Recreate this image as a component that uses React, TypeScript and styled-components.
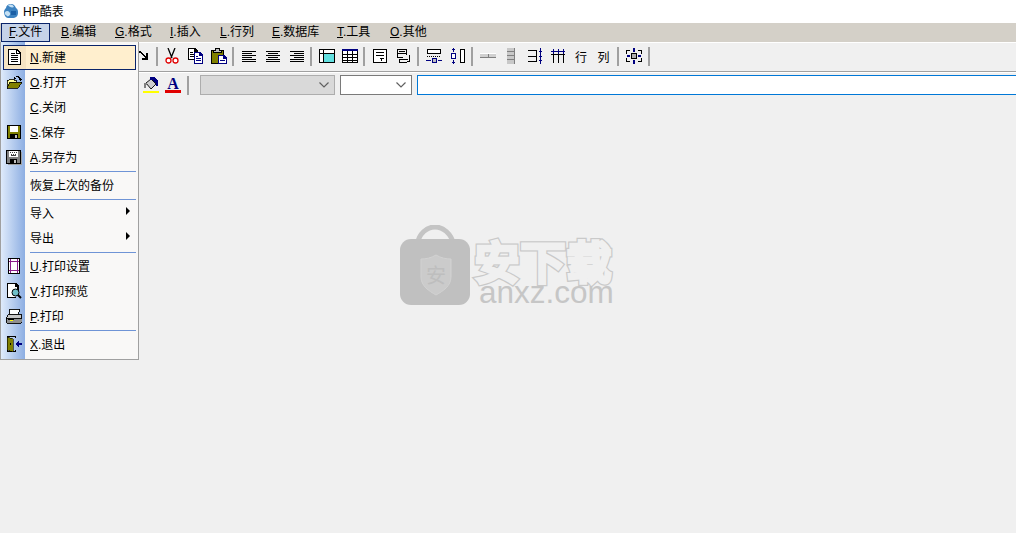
import React from 'react'
import styled, { createGlobalStyle } from 'styled-components'

const GlobalStyle = createGlobalStyle`
  html, body {
    margin: 0;
    padding: 0;
    background: #F0F0F0;
  }
  body {
    font-family: "Liberation Sans", "Noto Sans CJK SC", sans-serif;
    font-size: 12px;
    color: #000;
  }
`

const Page = styled.div`
  position: relative;
  width: 1016px;
  height: 533px;
  overflow: hidden;
  background: #F0F0F0;
`

const TitleBar = styled.div`
  box-sizing: border-box;
  height: 23px;
  background: #FFF;
  display: flex;
  align-items: center;
  padding: 0 0 2px 3px;
  gap: 4px;
`

const MenuBar = styled.div`
  height: 19px;
  background: #D4D0C8;
  display: flex;
  align-items: center;
  padding-left: 1px;
`

const MenuItem = styled.div<{ $w: number; $active?: boolean }>`
  box-sizing: border-box;
  width: ${props => props.$w}px;
  height: 19px;
  line-height: 17px;
  padding-left: ${props => props.$active ? 7 : 10}px;
  border: 1px solid ${props => props.$active ? '#0A246A' : 'transparent'};
  background: ${props => props.$active ? '#C6D3E8' : 'transparent'};
  white-space: nowrap;
`

const Toolbar = styled.div`
  height: 26px;
  border-top: 1px solid #FFF;
  border-bottom: 1px solid #A0A0A0;
  box-shadow: 0 1px 0 #FFF;
  display: flex;
  align-items: center;
  padding-left: 132px;
  padding-bottom: 2px;
  box-sizing: content-box;
`

const ToolButton = styled.div<{ $w: number }>`
  width: ${props => props.$w}px;
  height: 22px;
  flex: none;
  display: flex;
  align-items: center;
  justify-content: center;
  font-size: 12px;
`

const ToolSep = styled.div`
  width: 2px;
  height: 19px;
  margin: 0 2px;
  flex: none;
  background: #A0A0A0;
`

const FormatBar = styled.div`
  height: 26px;
  display: flex;
  align-items: center;
  padding-left: 140px;
  box-sizing: border-box;
`

const FontColor = styled.div`
  width: 16px;
  height: 16px;
  box-sizing: border-box;
  border-bottom: 3px solid #E00000;
  font-family: "Liberation Serif", serif;
  font-weight: 700;
  font-size: 16px;
  line-height: 13px;
  text-align: center;
  color: #000080;
`

const Combo = styled.div<{ $w: number; $disabled?: boolean }>`
  box-sizing: border-box;
  width: ${props => props.$w}px;
  height: 20px;
  flex: none;
  margin-right: 5px;
  border: 1px solid ${props => props.$disabled ? '#ADADAD' : '#7A7A7A'};
  background: ${props => props.$disabled ? '#D9D9D9' : '#FFF'};
  display: flex;
  align-items: center;
  justify-content: flex-end;
  padding-right: 5px;
`

const Input = styled.div`
  box-sizing: border-box;
  flex: none;
  width: 610px;
  height: 20px;
  border: 1px solid #0078D7;
  background: #FFF;
`

const Menu = styled.div`
  position: absolute;
  left: 0;
  top: 42px;
  width: 139px;
  height: 318px;
  box-sizing: border-box;
  border: 1px solid #A0A0A0;
  border-top: none;
  padding: 3px 2px 2px 0;
  background: linear-gradient(to right, #DFEBFB 0, #8DAEE2 24px, #F9F8F7 24px);
`

const Row = styled.div<{ $hot?: boolean }>`
  box-sizing: border-box;
  height: 25px;
  margin-left: ${props => props.$hot ? 2 : 0}px;
  padding-bottom: 2px;
  display: flex;
  align-items: center;
  border: 1px solid ${props => props.$hot ? '#0A246A' : 'transparent'};
  background: ${props => props.$hot
    ? 'linear-gradient(to right, #F5E4C4 0, #F5E4C4 22px, #FFEFCE 22px)'
    : 'transparent'};
  position: relative;
`

const RowIcon = styled.div<{ $hot?: boolean }>`
  width: ${props => props.$hot ? 26 : 28}px;
  height: 16px;
  flex: none;
  display: flex;
  justify-content: center;
  padding-right: 4px;
  box-sizing: border-box;
`

const Arrow = styled.div`
  position: absolute;
  right: 5px;
  top: 5px;
  width: 0;
  height: 0;
  border-left: 4px solid #000;
  border-top: 4px solid transparent;
  border-bottom: 4px solid transparent;
`

const MenuLine = styled.div`
  height: 1px;
  margin: 1px 0 1px 29px;
  background: #6F94D6;
`

const Watermark = styled.div`
  position: absolute;
  left: 400px;
  top: 225px;
  display: flex;
  gap: 5px;

  svg {
    flex: none;
  }
`

const Brand = styled.div`
  display: flex;
  flex-direction: column;
  padding-top: 12px;
`

const BrandCn = styled.div`
  position: relative;
  font-family: "Noto Sans CJK SC", sans-serif;
  font-weight: 400;
  font-size: 44px;
  line-height: 46px;
  letter-spacing: 2px;
  white-space: nowrap;
  color: #C9C9C9;
  -webkit-text-stroke: 7px #C9C9C9;

  &::after {
    content: attr(data-text);
    position: absolute;
    left: 0;
    top: 0;
    color: #F0F0F0;
    -webkit-text-stroke: 4.500px #F0F0F0;
  }
`

const BrandEn = styled.div`
  font-family: "Liberation Sans", sans-serif;
  font-size: 31.500px;
  line-height: 24px;
  margin: -3px 0 0 4px;
  color: #C6C6C6;
  white-space: nowrap;
  position: relative;
`

type IconProps = { children: React.ReactNode }

const Px = ({ children }: IconProps) => (
  <svg width="16" height="16" viewBox="0 0 16 16" shapeRendering="crispEdges">{children}</svg>
)

const AppLogo = () => (
  <svg width="16" height="16" viewBox="0 0 16 16">
    <path d="M1 9c0-2 1-3 2-4 0-2 2-4 5-4s4 2 5 4c2 1 2 3 2 5 0 3-2 5-6 5H5c-2 0-4-3-4-6z" fill="#3C82C0" />
    <path d="M5 2c2-1 5-1 6 2-2 1-5 0-6-2zM2 9c2-2 4-1 5 1s-2 4-3 3-3-2-2-4z" fill="#C4E0F4" />
    <path d="M8 8h5v4H8z" fill="#1B5FA5" />
  </svg>
)

const NewIcon = () => <Px>
  <path d="M1 0h9l4 4v12H1z" fill="#000" />
  <path d="M2 1h7v4h4v10H2z" fill="#FFF" />
  <path d="M10 2l2 2h-2z" fill="#FFF" />
  <path d="M4 4h4v1H4zM4 6h7v1H4zM4 8h7v1H4zM4 10h7v1H4zM4 12h7v1H4z" fill="#000" />
</Px>

const OpenIcon = () => <Px>
  <path d="M1 6h2l1-1h4v1h2v2H5l-3 6H1z" fill="#FFFF99" stroke="#000" strokeWidth="0.8" />
  <path d="M1 14l3-6h12l-4 6z" fill="#808000" stroke="#000" strokeWidth="0.8" />
  <path d="M8 3h1v1h1V2h3v1h1v1h1v1h-2V4h-1V3h-2v2H8z" fill="#000" />
  <path d="M13 5h3l-1.500 2z" fill="#000" />
</Px>

const SaveIcon = () => <Px>
  <path d="M1 1h14v14H1z" fill="#000" />
  <path d="M2 2h12v12H2z" fill="#808000" />
  <path d="M4 2h8v6H4z" fill="#FFF" />
  <path d="M4 10h8v5H4z" fill="#000" />
  <path d="M9 11h2v3H9z" fill="#C0C0C0" />
</Px>

const SaveAsIcon = () => <Px>
  <path d="M0 1h15v14H0z" fill="#000" />
  <path d="M1 2h13v12H1z" fill="#808080" />
  <path d="M3 2h9v6H3z" fill="#FFF" />
  <path d="M4 3h1v1H4zM6 3h1v1H6zM8 3h1v1H8zM10 3h1v1h-1zM5 5h1v1H5zM7 5h1v1H7zM9 5h1v1H9zM5 6h5v1H5z" fill="#404040" />
  <path d="M4 10h7v5H4z" fill="#000" />
  <path d="M8 11h2v3H8z" fill="#C0C0C0" />
  <path d="M15 3h1v13H2v-1h13z" fill="#A0A0A0" />
</Px>

const SetupIcon = () => <Px>
  <path d="M2 0h12v16H2z" fill="#000" />
  <path d="M3 1h10v14H3z" fill="#FFF" />
  <path d="M4 1h1v14H4zM11 1h1v14h-1zM3 3h10v1H3zM3 12h10v1H3z" fill="#8B1C8B" />
</Px>

const PreviewIcon = () => <Px>
  <path d="M1 0h9l3 3v5h-2V4H9V1H2v13h8v1H1z" fill="#000" />
  <path d="M2 1h7v3h2v7l-2 3H2z" fill="#FFF" />
  <circle cx="9.500" cy="9.500" r="3.500" fill="#6FBFC8" stroke="#000" shapeRendering="auto" />
  <path d="M12 12l3 3" stroke="#000" strokeWidth="2" shapeRendering="auto" />
</Px>

const PrintIcon = () => <Px>
  <path d="M4 1h10l-2 5H3z" fill="#FFF" stroke="#000" strokeWidth="0.9" />
  <path d="M3 6h12l1 4H0z" fill="#C8C8C8" stroke="#000" strokeWidth="0.9" />
  <path d="M0 10h16v4l-1 1H1l-1-1z" fill="#909090" stroke="#000" strokeWidth="0.9" />
  <path d="M2 11h6v1H2z" fill="#000" />
  <path d="M4 12h3v1H4z" fill="#FFFF00" />
</Px>

const ExitIcon = () => <Px>
  <path d="M1 0h9v2H9V1H2v14h7v-1h1v2H1z" fill="#000" />
  <path d="M1 1l6 2v13l-6-2z" fill="#808000" stroke="#000" strokeWidth="0.6" />
  <path d="M4 7h1v2H4z" fill="#000" />
  <path d="M9 8l4-4v3h3v2h-3v3z" fill="#000080" />
</Px>

const RedoIcon = () => <Px>
  <path d="M0 3h6v1h1v1h1v1h1v1h1v1h1V5h2v7H7v-2h3V9H9V8H8V7H7V6H6V5H0z" fill="#000" />
</Px>

const CutIcon = () => <Px>
  <path d="M4 0l4 10M11 0L7 10" stroke="#000" strokeWidth="1.300" fill="none" shapeRendering="auto" />
  <circle cx="4.500" cy="12.500" r="2.500" fill="#FFF" stroke="#E00000" strokeWidth="1.300" shapeRendering="auto" />
  <circle cx="11.500" cy="12.500" r="2.500" fill="#FFF" stroke="#E00000" strokeWidth="1.300" shapeRendering="auto" />
</Px>

const CopyIcon = () => <Px>
  <path d="M0 0h7l3 3v9H0z" fill="#000" />
  <path d="M1 1h5v3h3v7H1z" fill="#FFF" />
  <path d="M2 4h3v1H2zM2 6h4v1H2zM2 8h4v1H2z" fill="#000" />
  <path d="M6 4h6l3 3v9H6z" fill="#000080" />
  <path d="M7 5h4v3h3v7H7z" fill="#FFF" />
  <path d="M8 8h2v1H8zM8 10h5v1H8zM8 12h5v1H8z" fill="#000080" />
</Px>

const PasteIcon = () => <Px>
  <path d="M0 2h13v14H0z" fill="#000" />
  <path d="M1 3h11v12H1z" fill="#808000" />
  <path d="M4 0h5v2h2v3H2V2h2z" fill="#000" />
  <path d="M5 1h3v2h2v1H3V3h2z" fill="#C0C0C0" />
  <path d="M7 7h6l3 3v6H7z" fill="#000080" />
  <path d="M8 8h4v3h3v4H8z" fill="#FFF" />
  <path d="M9 12h5v1H9z" fill="#000080" />
</Px>

const AlignIcon = ({ mode }: { mode: 'left' | 'center' | 'right' }) => {
  const rows = [[14, 3], [10, 5], [14, 7], [10, 9], [14, 11], [14, 13]]
  return <Px>
    {rows.map(([w, y], i) => {
      const x = mode === 'left' ? 1 : mode === 'center' ? (16 - w) / 2 : 15 - w
      return <rect key={i} x={x} y={y} width={w} height="1" fill="#000" />
    })}
  </Px>
}

const GridFillIcon = () => <Px>
  <path d="M0 1h16v14H0z" fill="#000" />
  <path d="M1 2h14v12H1z" fill="#FFF" />
  <path d="M5 6h10v8H5z" fill="#62E0E0" />
  <path d="M1 5h14v1H1zM4 2h1v12H4z" fill="#000" />
</Px>

const GridIcon = () => <Px>
  <path d="M0 1h16v14H0z" fill="#000" />
  <path d="M1 3h14v11H1z" fill="#FFF" />
  <path d="M0 1h16v2H0z" fill="#000080" />
  <path d="M1 6h14v1H1zM1 9h14v1H1zM1 12h14v1H1zM5 3h1v11H5zM10 3h1v11h-1z" fill="#000" />
</Px>

const FormIcon = () => <Px>
  <path d="M1 1h14v14H1z" fill="#000" />
  <path d="M2 2h12v12H2z" fill="#FFF" />
  <path d="M4 4h8v1H4zM4 7h8v1H4zM8 10h4v1H8zM9 11h1v2H9z" fill="#000" />
</Px>

const FormSplitIcon = () => <Px>
  <path d="M1 1h10v1H1zM1 1h1v8H1zM10 1h1v6h-1zM1 5h10v1H1zM3 3h6v1H3zM1 9h6v1H1zM3 11h9v1H3zM3 11h1v3H3zM3 14h8v1H3z" fill="#000" />
  <path d="M13 7h1v7h-1zM11 13h2v1h-2z" fill="#000" />
</Px>

const RowSizeIcon = () => <Px>
  <path d="M1 1h14v5H1z" fill="#000" />
  <path d="M2 2h12v3H2z" fill="#FFF" />
  <path d="M1 8h1v1H1zM3 8h1v1H3zM5 8h1v1H5zM7 8h1v1H7zM9 8h1v1H9zM11 8h1v1h-1zM13 8h1v1h-1z" fill="#000" />
  <path d="M6 10h5v5H6z" fill="#000080" />
  <path d="M7 11h3v3H7z" fill="#C0C0C0" />
  <path d="M0 12h5v1H0zM12 12h4v1h-4z" fill="#000080" />
</Px>

const ColSizeIcon = () => <Px>
  <path d="M10 1h5v14h-5z" fill="#000" />
  <path d="M11 2h3v12h-3z" fill="#FFF" />
  <path d="M1 5h5v6H1z" fill="#000080" />
  <path d="M2 6h3v4H2z" fill="#FFF" />
  <path d="M3 0h1v4H3zM2 1h3v1H2zM3 12h1v4H3zM2 14h3v1H2z" fill="#000080" />
</Px>

const MergeRowIcon = () => <Px>
  <path d="M0 6h16v3H0z" fill="#D0D0D0" />
  <path d="M0 9h16v1H0zM8 6h1v4H8z" fill="#808080" />
  <path d="M0 5h16v1H0z" fill="#FFF" />
</Px>

const MergeColIcon = () => <svg width="8" height="16" viewBox="0 0 8 16" shapeRendering="crispEdges">
  <path d="M0 0h7v16H0z" fill="#C8C8C8" />
  <path d="M0 3h7v1H0zM0 7h7v1H0zM0 11h7v1H0zM7 0h1v16H7z" fill="#808080" />
</svg>

const AddColIcon = () => <Px>
  <path d="M1 2h9v1H1zM1 8h9v1H1zM1 13h9v1H1zM9 2h1v12H9z" fill="#000" />
  <path d="M13 0h1v16h-1zM12 3h3v1h-3zM12 8h3v1h-3zM12 12h3v1h-3z" fill="#000080" />
</Px>

const AddRowIcon = () => <Px>
  <path d="M1 6h14v1H1zM3 6h1v9H3zM8 6h1v9H8zM13 6h1v9h-1z" fill="#000" />
  <path d="M1 3h14v1H1zM3 1h1v5H3zM8 1h1v5H8zM13 1h1v5h-1z" fill="#000080" />
</Px>

const FrameIcon = () => <Px>
  <path d="M0 2h4v1H1v3H0zM12 2h4v4h-1V3h-3zM0 10h1v3h3v1H0zM15 10h1v4h-4v-1h3z" fill="#000" />
  <path d="M5 5h6v6H5z" fill="#000" />
  <path d="M6 6h4v4H6z" fill="#B0B0B0" />
  <path d="M7 0h2v4H7zM7 12h2v4H7zM1 7h3v2H1zM12 7h3v2h-3z" fill="#000080" />
</Px>

const BucketIcon = () => <Px>
  <path d="M3 6l5-4 5 5-5 5z" fill="#D0D0D0" stroke="#000" strokeWidth="0.9" shapeRendering="auto" />
  <path d="M7 0h5l3 4v5h-2V6L9 3H7z" fill="#000080" />
  <path d="M1 6h3l-1 5H1z" fill="#808080" />
  <path d="M0 14h16v2H0z" fill="#FFFF00" />
</Px>

const Chevron = () => (
  <svg width="10" height="6" viewBox="0 0 10 6">
    <path d="M.5 .5L5 5l4.500-4.500" fill="none" stroke="#606060" strokeWidth="1.200" />
  </svg>
)

const menus = [
  { label: 'F', text: '.文件', w: 49 },
  { label: 'B', text: '.编辑', w: 54 },
  { label: 'G', text: '.格式', w: 55 },
  { label: 'I', text: '.插入', w: 50 },
  { label: 'L', text: '.行列', w: 52 },
  { label: 'E', text: '.数据库', w: 65 },
  { label: 'T', text: '.工具', w: 53 },
  { label: 'O', text: '.其他', w: 60 },
]

const tools: { icon?: React.ReactNode; w?: number }[] = [
  { icon: <RedoIcon />, w: 22 }, {},
  { icon: <CutIcon />, w: 24 }, { icon: <CopyIcon />, w: 24 }, { icon: <PasteIcon />, w: 22 }, {},
  { icon: <AlignIcon mode="left" />, w: 25 }, { icon: <AlignIcon mode="center" />, w: 24 }, { icon: <AlignIcon mode="right" />, w: 23 }, {},
  { icon: <GridFillIcon />, w: 25 }, { icon: <GridIcon />, w: 22 }, {},
  { icon: <FormIcon />, w: 26 }, { icon: <FormSplitIcon />, w: 22 }, {},
  { icon: <RowSizeIcon />, w: 25 }, { icon: <ColSizeIcon />, w: 23 }, {},
  { icon: <MergeRowIcon />, w: 26 }, { icon: <MergeColIcon />, w: 19 }, { icon: <AddColIcon />, w: 29 }, { icon: <AddRowIcon />, w: 17 },
  { icon: '行', w: 30 }, { icon: '列', w: 15 }, { w: 4 }, {},
  { icon: <FrameIcon />, w: 25 }, {},
]

type MenuEntry = { key?: string; text?: string; icon?: React.ReactNode; hot?: boolean; sub?: boolean; line?: boolean }

const entries: MenuEntry[] = [
  { key: 'N', text: '.新建', icon: <NewIcon />, hot: true },
  { key: 'O', text: '.打开', icon: <OpenIcon /> },
  { key: 'C', text: '.关闭' },
  { key: 'S', text: '.保存', icon: <SaveIcon /> },
  { key: 'A', text: '.另存为', icon: <SaveAsIcon /> },
  { line: true },
  { text: '恢复上次的备份' },
  { line: true },
  { text: '导入', sub: true },
  { text: '导出', sub: true },
  { line: true },
  { key: 'U', text: '.打印设置', icon: <SetupIcon /> },
  { key: 'V', text: '.打印预览', icon: <PreviewIcon /> },
  { key: 'P', text: '.打印', icon: <PrintIcon /> },
  { line: true },
  { key: 'X', text: '.退出', icon: <ExitIcon /> },
]

const App = () => {
  return <Page>
    <GlobalStyle />
    <TitleBar>
      <AppLogo />
      <span>HP酷表</span>
    </TitleBar>

    <MenuBar>
      {menus.map((menu, index) => (
        <MenuItem key={menu.label} $w={menu.w} $active={index === 0}>
          <u>{menu.label}</u>{menu.text}
        </MenuItem>
      ))}
    </MenuBar>

    <Toolbar>
      {tools.map((tool, index) => (
        tool.icon || tool.w
          ? <ToolButton key={index} $w={tool.w || 0}>{tool.icon}</ToolButton>
          : <ToolSep key={index} />
      ))}
    </Toolbar>

    <FormatBar>
      <ToolButton $w={21}><BucketIcon /></ToolButton>
      <ToolButton $w={24}><FontColor>A</FontColor></ToolButton>
      <ToolSep />
      <ToolButton $w={9} />
      <Combo $w={135} $disabled><Chevron /></Combo>
      <Combo $w={72}><Chevron /></Combo>
      <Input />
    </FormatBar>

    <Menu>
      {entries.map((entry, index) => entry.line
        ? <MenuLine key={index} />
        : <Row key={index} $hot={entry.hot}>
            <RowIcon $hot={entry.hot}>{entry.icon}</RowIcon>
            <span>{entry.key && <u>{entry.key}</u>}{entry.text}</span>
            {entry.sub && <Arrow />}
          </Row>
      )}
    </Menu>

    <Watermark>
      <svg width="70" height="82" viewBox="0 0 70 82">
        <path d="M17 20C19 8 27 2 35 2s16 6 19 18" fill="none" stroke="#C4C4C4" strokeWidth="5" />
        <rect x="0" y="14" width="70" height="66" rx="11" fill="#C0C0C0" />
        <path d="M36 30c5 3 10 4 15 4v18c0 9-8 14-15 18-7-4-15-9-15-18V34c5 0 10-1 15-4z" fill="#CBCBCB" stroke="#D2D2D2" />
        <text x="36" y="58" textAnchor="middle" fontFamily="Noto Sans CJK SC, sans-serif" fontSize="20" fill="#BEBEBE">安</text>
      </svg>
      <Brand>
        <BrandCn data-text="安下载">安下载</BrandCn>
        <BrandEn>anxz.com</BrandEn>
      </Brand>
    </Watermark>
  </Page>
}

export default App
